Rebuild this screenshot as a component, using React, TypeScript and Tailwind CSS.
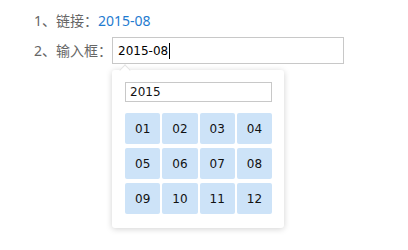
const months = ['01', '02', '03', '04', '05', '06', '07', '08', '09', '10', '11', '12']

function MonthPicker() {
  return (
    <div className="absolute left-0 top-[33px] w-[172px] rounded-[3px] bg-white px-[13px] pt-[12px] pb-[14px] shadow-[0_1px_6px_rgba(0,0,0,0.18)]">
      {/* little arrow pointing at the input */}
      <div className="absolute left-[9px] top-[-4px] h-[8px] w-[8px] rotate-45 border-l border-t border-[#e4e4e4] bg-white" />
      <div className="flex h-[20px] w-[147px] items-center border border-[#c8c8c8] px-[4px] text-[12px] text-[#111]">
        2015
      </div>
      <div className="mt-[11px] grid w-[147px] grid-cols-4 gap-x-[2px] gap-y-[4px]">
        {months.map((m) => (
          <div
            key={m}
            className="flex h-[31px] items-center justify-center rounded-[2px] bg-[#cde3f8] text-[12px] text-[#111]"
          >
            {m}
          </div>
        ))}
      </div>
    </div>
  )
}

export default function App() {
  return (
    <div className="h-[250px] w-[408px] bg-white pl-[34px] pt-[8px] font-['Noto_Sans','Noto_Sans_CJK_SC',sans-serif] text-[14px] text-[#666]">
      <div className="flex h-[24px] items-center">
        <span>1、链接：</span>
        <a className="text-[#1f7bd0]">2015-08</a>
      </div>
      <div className="mt-[5px] flex items-center">
        <span>2、输入框：</span>
        <div className="relative">
          <div className="flex h-[27px] w-[232px] items-center border border-[#c8c8c8] pl-[5px] font-['DejaVu_Sans',sans-serif] text-[12px] text-black">
            2015-08
            <span className="ml-[1px] h-[16px] w-px bg-black" />
          </div>
          <div className="font-['DejaVu_Sans',sans-serif]">
            <MonthPicker />
          </div>
        </div>
      </div>
    </div>
  )
}
